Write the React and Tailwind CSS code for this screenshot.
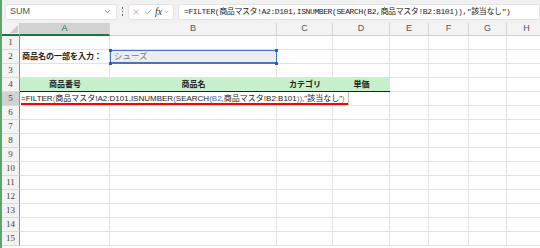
import React from "react";
import { X, Check, ChevronDown } from "lucide-react";

const cols = [
    { key: "A", w: "w-[90px]" },
    { key: "B", w: "w-[167px]" },
    { key: "C", w: "w-[56px]" },
    { key: "D", w: "w-[57px]" },
    { key: "E", w: "w-[39px]" },
    { key: "F", w: "w-[40px]" },
    { key: "G", w: "w-[38px]" },
    { key: "H", w: "w-[40px]" },
];

const jp = "font-['Liberation_Sans','Noto_Sans_CJK_JP',sans-serif]";

function RowHead({ n, active }) {
    return (
        <div
            className={`w-[18px] shrink-0 h-full flex items-center justify-center border-r border-r-[#8f8f8f] border-b border-b-[#dadada] text-[9px] font-['Liberation_Serif',serif] ${
                active ? "bg-[#d2d2d2] text-[#3b3b3b]" : "bg-[#f3f3f3] text-[#444]"
            }`}
        >
            {n}
        </div>
    );
}

function Cell({ w, className = "", children }) {
    return (
        <div
            className={`${w} shrink-0 h-full border-r border-r-[#e2e2e2] border-b border-b-[#e2e2e2] ${className}`}
        >
            {children}
        </div>
    );
}

function EmptyRow({ n }) {
    return (
        <div className="flex h-[14px]">
            <RowHead n={n} />
            {cols.map((c) => (
                <Cell key={c.key} w={c.w} />
            ))}
        </div>
    );
}

export default function App() {
    const headers = ["商品番号", "商品名", "カテゴリ", "単価"];

    return (
        <div className="w-[540px] h-[248px] overflow-hidden bg-white border-l-2 border-l-[#5ea46f] relative">
            {/* 数式バー */}
            <div className="h-[23px] bg-[#f1f1f1] flex items-center pl-[3px]">
                <div className="w-[112px] shrink-0 h-[16px] bg-white rounded-[3px] border border-[#e4e4e4] flex items-center justify-between px-[4px]">
                    <span className="text-[9px] text-[#555] font-['Liberation_Sans',sans-serif]">SUM</span>
                    <ChevronDown size={9} className="text-[#666]" />
                </div>
                <div className="w-[11px] shrink-0 flex flex-col items-center gap-[2px]">
                    <div className="w-[1.5px] h-[1.5px] bg-[#666]" />
                    <div className="w-[1.5px] h-[1.5px] bg-[#666]" />
                    <div className="w-[1.5px] h-[1.5px] bg-[#666]" />
                </div>
                <div className="w-[46px] shrink-0 h-[16px] bg-white rounded-[3px] border border-[#e4e4e4] flex items-center px-[3px] gap-[3px]">
                    <X size={10} className="text-[#e04848]" strokeWidth={1.5} />
                    <Check size={10} className="text-[#4a9a5a]" strokeWidth={1.5} />
                    <span className="text-[10px] italic font-['Liberation_Serif',serif] text-[#333]">fx</span>
                    <ChevronDown size={8} className="text-[#888] -ml-[2px]" />
                </div>
                <div className="flex-1 ml-[4px] h-[16px] bg-white rounded-l-[3px] border border-[#e4e4e4] flex items-center pl-[5px]">
                    <span className="text-[8px] tracking-[-0.4px] text-[#222] whitespace-nowrap font-['Liberation_Mono','Noto_Sans_CJK_JP',monospace]">
                        =FILTER(商品マスタ!A2:D101,ISNUMBER(SEARCH(B2,商品マスタ!B2:B101)),"該当なし")
                    </span>
                </div>
            </div>

            {/* 列見出し */}
            <div className="flex h-[13px] bg-[#f3f3f3]">
                <div className="w-[18px] shrink-0 h-full border-r border-r-[#c8c8c8] border-b-2 border-b-[#217346] bg-[#f3f3f3] relative">
                    <div className="absolute right-[1px] bottom-[1px] w-0 h-0 border-l-[8px] border-l-transparent border-b-[8px] border-b-[#c9c9c9]" />
                </div>
                {cols.map((c) => (
                    <div
                        key={c.key}
                        className={`${c.w} shrink-0 h-full flex items-center justify-center text-[9px] font-['Liberation_Sans',sans-serif] border-r border-r-[#d6d6d6] ${
                            c.key === "A"
                                ? "bg-[#d2d2d2] text-[#217346] border-b-2 border-b-[#217346]"
                                : "text-[#555] border-b border-b-[#d0d0d0]"
                        }`}
                    >
                        {c.key}
                    </div>
                ))}
            </div>

            {/* 1行目 */}
            <EmptyRow n={1} />

            {/* 2行目 */}
            <div className="flex h-[14px]">
                <RowHead n={2} />
                <Cell w={cols[0].w} className="flex items-center pl-[2px]">
                    <span className={`text-[8px] font-bold text-[#222] whitespace-nowrap ${jp}`}>
                        商品名の一部を入力：
                    </span>
                </Cell>
                <div className="w-[167px] shrink-0 h-full relative border-b border-b-[#e2e2e2]">
                    <div className="absolute inset-x-0 top-0 bottom-[-1px] bg-[#ededed] border border-[#4472c4] border-b-2 flex items-center pl-[3px]">
                        <span className={`text-[8.5px] text-[#7a7a7a] ${jp}`}>シューズ</span>
                    </div>
                    <div className="absolute left-[-1px] top-[-1px] w-[3px] h-[3px] bg-[#2f5fb3]" />
                    <div className="absolute right-[-1px] top-[-1px] w-[3px] h-[3px] bg-[#2f5fb3]" />
                    <div className="absolute left-[-1px] bottom-[-2px] w-[3px] h-[3px] bg-[#2f5fb3]" />
                    <div className="absolute right-[-1px] bottom-[-2px] w-[3px] h-[3px] bg-[#2f5fb3]" />
                </div>
                {cols.slice(2).map((c) => (
                    <Cell key={c.key} w={c.w} />
                ))}
            </div>

            {/* 3行目 */}
            <EmptyRow n={3} />

            {/* 4行目 見出し */}
            <div className="flex h-[14px]">
                <RowHead n={4} />
                {cols.slice(0, 4).map((c, i) => (
                    <div
                        key={c.key}
                        className={`${c.w} shrink-0 h-full bg-[#c6efcb] border-b border-b-[#222] flex items-center justify-center`}
                    >
                        <span className={`text-[8px] font-bold text-[#222] ${jp}`}>{headers[i]}</span>
                    </div>
                ))}
                {cols.slice(4).map((c) => (
                    <Cell key={c.key} w={c.w} />
                ))}
            </div>

            {/* 5行目 編集中 */}
            <div className="flex h-[14px]">
                <RowHead n={5} active />
                <div className="flex-1 h-full border-b border-b-[#e2e2e2] relative">
                    <div className="absolute left-0 top-0 h-[13px] w-[329px] bg-white flex items-center pl-[1px] border-r border-[#bbb]">
                        <span className={`text-[8px] text-[#222] whitespace-nowrap ${jp}`}>
                            =FILTER<span className="text-[#d07a2a]">(</span>商品マスタ!A2:D101,ISNUMBER
                            <span className="text-[#8a4fb0]">(</span>SEARCH
                            <span className="text-[#3a8a3a]">(</span>
                            <span className="text-[#3b6fd0]">B2</span>,商品マスタ!B2:B101
                            <span className="text-[#3a8a3a]">)</span>
                            <span className="text-[#8a4fb0]">)</span>,"該当なし"
                            <span className="text-[#d07a2a]">)</span>
                        </span>
                    </div>
                    <div className="absolute left-[1px] top-[11px] w-[327px] h-[2px] bg-[#ff0000]" />
                    <div className="absolute left-[329px] top-0 h-full flex">
                        <div className="w-[41px] h-full border-r border-r-[#e2e2e2]" />
                        <div className="w-[39px] h-full border-r border-r-[#e2e2e2]" />
                        <div className="w-[40px] h-full border-r border-r-[#e2e2e2]" />
                        <div className="w-[38px] h-full border-r border-r-[#e2e2e2]" />
                    </div>
                </div>
            </div>

            {[6, 7, 8, 9, 10, 11, 12, 13, 14, 15].map((n) => (
                <EmptyRow key={n} n={n} />
            ))}
        </div>
    );
}
